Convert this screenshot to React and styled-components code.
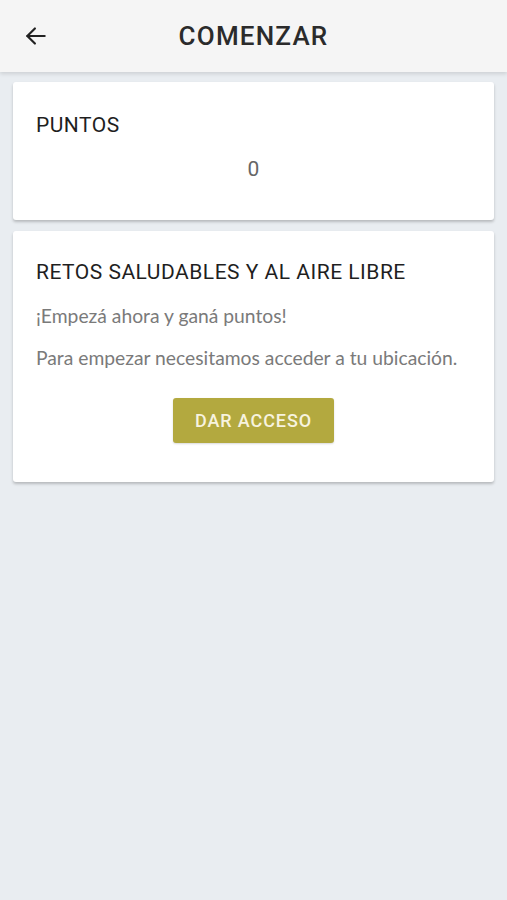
import React from 'react'
import styled, { createGlobalStyle } from 'styled-components'

const Global = createGlobalStyle`
  html, body {
    margin: 0;
    padding: 0;
    background: #e9edf1;
  }
  body {
    font-family: Roboto, "Liberation Sans", sans-serif;
  }
`

const Screen = styled.div`
  min-height: 900px;
  background: #e9edf1;
  display: flex;
  flex-direction: column;
`

const Header = styled.header`
  height: 72px;
  background: #f5f5f5;
  display: flex;
  align-items: center;
  position: relative;
  box-shadow: 0 2px 4px rgba(0, 0, 0, 0.12);
  z-index: 1;
`

const BackButton = styled.button`
  border: 0;
  background: none;
  padding: 0;
  margin-left: 22px;
  width: 28px;
  height: 28px;
  display: flex;
  align-items: center;
  justify-content: center;
  color: #222;
`

const Title = styled.h1`
  position: absolute;
  left: 0;
  right: 0;
  margin: 0;
  text-align: center;
  font-size: 26px;
  font-weight: 500;
  letter-spacing: 1.2px;
  color: #2b2b2b;
  pointer-events: none;
`

const Content = styled.main`
  padding: 10px 13px;
  display: flex;
  flex-direction: column;
  gap: 11px;
`

const Card = styled.section`
  background: #fff;
  border-radius: 3px;
  box-shadow: 0 2px 3px rgba(0, 0, 0, 0.22);
  padding: ${p => p.$pad || '22px 23px'};
  display: flex;
  flex-direction: column;
`

const CardTitle = styled.h2`
  margin: 0;
  font-size: 21px;
  font-weight: 400;
  color: #1f1f1f;
  letter-spacing: 0.5px;
`

const Score = styled.div`
  text-align: center;
  font-size: 21px;
  color: #666;
  margin-top: 20px;
  padding-bottom: 19px;
`

const Text = styled.p`
  margin: ${p => p.$mt || '0'} 0 0;
  font-family: Lato, "Open Sans", sans-serif;
  font-size: 19.3px;
  color: #7a7a7a;
`

const AccessButton = styled.button`
  align-self: center;
  margin-top: 29px;
  width: 161px;
  height: 45px;
  border: 0;
  border-radius: 3px;
  background: #b3a93f;
  color: #f7f3df;
  font-family: Roboto, sans-serif;
  font-size: 18px;
  font-weight: 500;
  letter-spacing: 0.9px;
  box-shadow: 0 1px 2px rgba(0, 0, 0, 0.15);
`

export default function App() {
  return (
    <Screen>
      <Global />
      <Header>
        <BackButton aria-label="Volver">
          <svg width="26" height="26" viewBox="0 0 24 24" fill="none" stroke="currentColor" strokeWidth="2" strokeLinecap="round" strokeLinejoin="round">
            <path d="M20 12H4" />
            <path d="M11 5l-7 7 7 7" />
          </svg>
        </BackButton>
        <Title>COMENZAR</Title>
      </Header>
      <Content>
        <Card $pad="31px 23px 20px">
          <CardTitle>PUNTOS</CardTitle>
          <Score>0</Score>
        </Card>
        <Card $pad="29px 23px 39px">
          <CardTitle>RETOS SALUDABLES Y AL AIRE LIBRE</CardTitle>
          <Text $mt="20px">¡Empezá ahora y ganá puntos!</Text>
          <Text $mt="19px">Para empezar necesitamos acceder a tu ubicación.</Text>
          <AccessButton>DAR ACCESO</AccessButton>
        </Card>
      </Content>
    </Screen>
  )
}
